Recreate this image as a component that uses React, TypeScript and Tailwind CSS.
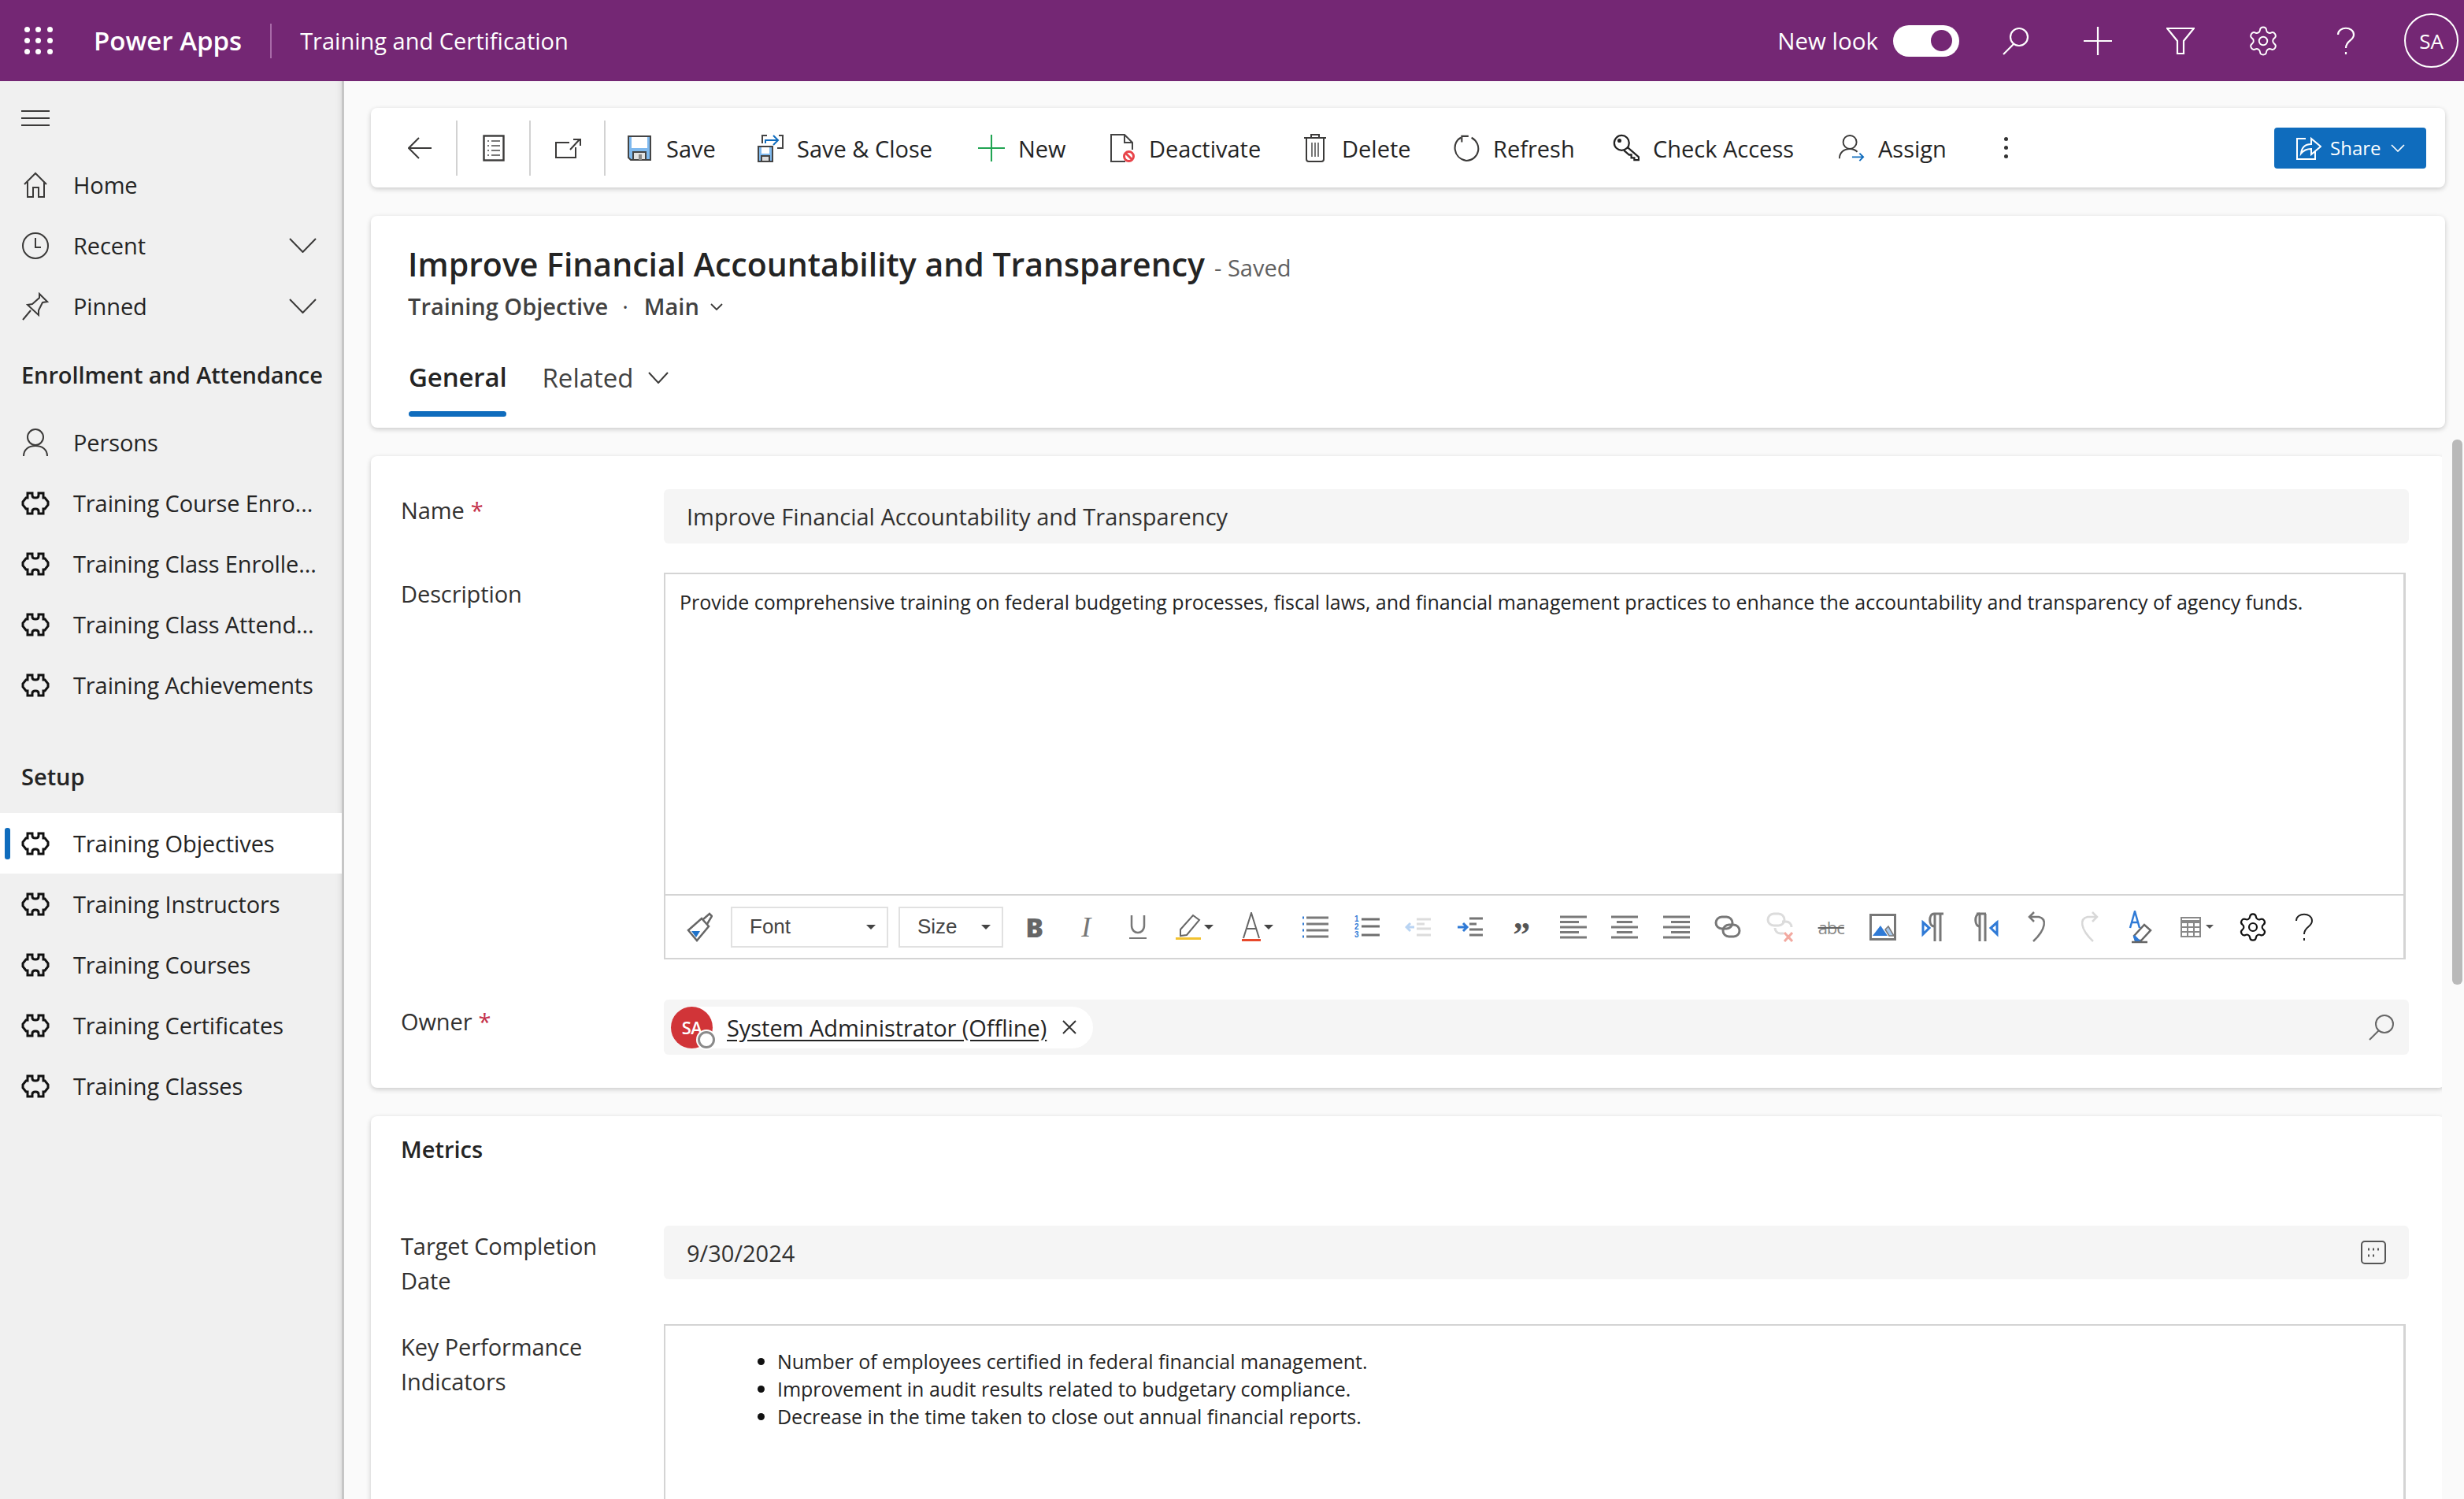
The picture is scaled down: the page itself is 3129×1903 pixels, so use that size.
import React from "react";
import { Settings } from "lucide-react";

const S = ({ w, h, vb, children, className, sw = 2, color = "#3b3a39" }: any) => (
  <svg width={w} height={h} viewBox={vb || `0 0 ${w} ${h}`} fill="none" stroke={color} strokeWidth={sw} className={className}>
    {children}
  </svg>
);

const Puzzle = () => (
  <S w={36} h={30} sw={3} color="#111">
    <path d="M8 2H14V5C14 9 22 9 22 5V2H28V8H30L34 13V17L30 22H28V28H22V25C22 21 14 21 14 25V28H8V22H6L2 17V13L6 8H8Z" strokeLinejoin="miter" />
  </S>
);
const Chevron = ({ w = 35, h = 19, sw = 2, color = "#3b3a39" }: any) => (
  <S w={w} h={h} sw={sw} color={color}><path d={`M1 1L${w / 2} ${h - 1}L${w - 1} 1`} /></S>
);
const Person = ({ w = 34, h = 36 }: any) => (
  <S w={w} h={h} vb="0 0 34 36" sw={2}>
    <circle cx="17" cy="11" r="10" />
    <path d="M2 35C2 27 8 22 17 22C26 22 32 27 32 35" />
  </S>
);
const Dropper = () => <span className="ml-[4px] h-0 w-0 border-x-[6px] border-t-[6px] border-x-transparent border-t-[#444]" />;

function NavRow({ icon, label, chevron, active }: any) {
  return (
    <div className={`relative flex h-[77px] items-center pl-[27px] pr-[32px] ${active ? "bg-white" : ""}`}>
      {active && <span className="absolute left-[6px] top-[19px] h-[40px] w-[7px] rounded-[3px] bg-[#0f6cbd]" />}
      <span className="flex w-[36px] justify-center">{icon}</span>
      <span className="ml-[30px] flex-1 whitespace-nowrap text-[29px] leading-none tracking-[-0.1px] text-[#242424]">{label}</span>
      {chevron && <Chevron />}
    </div>
  );
}

function ToolBtn({ w, icon, label }: any) {
  return (
    <div style={{ width: w }} className="flex h-full shrink-0 items-center">
      <span className="flex w-[34px] justify-center">{icon}</span>
      <span className="ml-[17px] whitespace-nowrap pt-[1px] text-[29px] leading-none text-[#242424]">{label}</span>
    </div>
  );
}

function Label({ children, star, className = "" }: any) {
  return (
    <div className={`w-[372px] shrink-0 pl-[38px] pr-[60px] text-[29px] leading-[44px] tracking-[-0.1px] text-[#323130] ${className}`}>
      {children}
      {star && <span className="ml-[8px] text-[#c4314b]">*</span>}
    </div>
  );
}

const Cell = ({ w = "65.5px", children }: any) => (
  <div style={{ width: w }} className="flex h-full shrink-0 items-center justify-center">{children}</div>
);

const Lines = ({ rows }: { rows: number[][] }) => (
  <S w={38} h={34} sw={3} color="#7a7a7a">
    {rows.map((r, i) => <path key={i} d={`M${r[0]} ${4 + i * 6.5}H${r[1]}`} />)}
  </S>
);

function EditorToolbar() {
  const blue = "#2f7ad6";
  return (
    <div className="flex h-[81px] items-center border-t-2 border-[#d4d4d4] pl-[10px]">
      <Cell w="66px">
        <S w={34} h={40} sw={2.5} color="#666">
          <path d="M3 24L20 9L29 19L14 37Z" />
          <path d="M7 25L18 25L13 33Z" fill="#1f72c9" stroke="none" />
          <path d="M22 10L30 3L33 6L27 16" />
        </S>
      </Cell>
      <div className="ml-[7px] flex h-[52px] w-[200px] items-center justify-between border-2 border-[#e1e1e1] pl-[22px] pr-[14px] font-['Liberation_Sans',sans-serif] text-[26px] text-[#444]">
        Font<span className="h-0 w-0 border-x-[6px] border-t-[6px] border-x-transparent border-t-[#444]" />
      </div>
      <div className="ml-[13px] flex h-[52px] w-[133px] items-center justify-between border-2 border-[#e1e1e1] pl-[22px] pr-[14px] font-['Liberation_Sans',sans-serif] text-[26px] text-[#444]">
        Size<span className="h-0 w-0 border-x-[6px] border-t-[6px] border-x-transparent border-t-[#444]" />
      </div>
      <div className="ml-[7px] flex h-full items-center">
        <Cell><span className="font-['Open_Sans',sans-serif] text-[34px] font-extrabold leading-none text-[#666]">B</span></Cell>
        <Cell><span className="font-['Liberation_Serif',serif] text-[36px] italic leading-none text-[#777]">I</span></Cell>
        <Cell>
          <span className="flex flex-col items-center">
            <S w={20} h={24} sw={2.5} color="#777"><path d="M2 0V13C2 25 18 25 18 13V0" /></S>
            <span className="mt-[4px] h-[2px] w-[22px] bg-[#777]" />
          </span>
        </Cell>
        <Cell w="78px">
          <span className="flex flex-col items-start">
            <S w={32} h={30} sw={2} color="#666">
              <path d="M6 20L22 2L30 8L14 27L6 28Z" />
            </S>
            <span className="h-[3px] w-[32px] bg-[#f2c230]" />
          </span>
          <Dropper />
        </Cell>
        <Cell w="82px">
          <span className="flex flex-col items-center">
            <S w={24} h={34} sw={2} color="#666"><path d="M2 33L12 1L22 33M6 21H18" /></S>
            <span className="h-[3px] w-[24px] bg-[#e8482b]" />
          </span>
          <Dropper />
        </Cell>
        <Cell>
          <S w={34} h={30} sw={3} color="#7a7a7a">
            <path d="M6 3H34M6 11H34M6 19H34M6 27H34" />
            <path d="M1 3H3M1 11H3M1 19H3M1 27H3" stroke={blue} />
          </S>
        </Cell>
        <Cell>
          <span className="flex items-center">
            <span className="flex flex-col font-['Liberation_Sans',sans-serif] text-[10px] font-bold leading-[10px] text-[#2f7ad6]"><span>1</span><span>2</span><span>3</span></span>
            <S w={26} h={30} sw={3} color="#6f6f6f"><path d="M3 5H26M3 14H26M3 25H26" /></S>
          </span>
        </Cell>
        <Cell>
          <S w={34} h={28} sw={3}>
            <path d="M15 4H33M15 10H25M15 16H33M15 24H33" stroke="#dcdcdc" />
            <path d="M12 14H2M7 9L2 14L7 19" stroke="#b9d4f3" />
          </S>
        </Cell>
        <Cell>
          <S w={34} h={28} sw={3}>
            <path d="M16 3H33M16 10H25M16 17H33M16 24H33" stroke="#757575" />
            <path d="M1 14H12M8 9L13 14L8 19" stroke={blue} />
          </S>
        </Cell>
        <Cell><span className="font-['Liberation_Serif',serif] text-[44px] font-bold leading-none text-[#555] translate-y-[10px]">”</span></Cell>
        <Cell><Lines rows={[[2, 36], [2, 26], [2, 36], [2, 26], [2, 36]]} /></Cell>
        <Cell><Lines rows={[[2, 36], [9, 29], [2, 36], [9, 29], [2, 36]]} /></Cell>
        <Cell><Lines rows={[[2, 36], [12, 36], [2, 36], [12, 36], [2, 36]]} /></Cell>
        <Cell>
          <S w={34} h={30} sw={3} color="#777">
            <rect x="2" y="2" width="21" height="15" rx="7.5" />
            <rect x="11" y="12" width="21" height="15" rx="7.5" />
          </S>
        </Cell>
        <Cell>
          <S w={34} h={38} sw={3} color="#dcdcdc">
            <rect x="2" y="2" width="21" height="15" rx="7.5" />
            <path d="M20 12H25C29 12 32 15 32 19M22 27H18C14 27 11 24 11 20" />
            <path d="M23 26L33 37M33 26L23 37" stroke="#f2a9a0" />
          </S>
        </Cell>
        <Cell>
          <span className="relative text-[22px] leading-none tracking-[-1px] text-[#888] line-through decoration-[#666] decoration-2">abc</span>
        </Cell>
        <Cell>
          <S w={34} h={34} sw={3} color="#777">
            <rect x="1.5" y="1.5" width="31" height="31" />
            <path d="M4 28L14 15L23 28Z" fill="#2f7ad6" stroke="none" />
            <path d="M20 20L24 16L31 28H25Z" fill="#aac8ea" stroke="#777" strokeWidth="1.5" />
          </S>
        </Cell>
        <Cell>
          <S w={32} h={40} sw={3} color="#777">
            <path d="M17 38V3M24 38V3M28 3H16C9 3 9 19 16 19H17" />
            <path d="M2 14L10 21L2 29Z" stroke="#2f7ad6" />
          </S>
        </Cell>
        <Cell>
          <S w={32} h={40} sw={3} color="#777">
            <path d="M8 38V3M15 38V3M4 3H16" />
            <path d="M8 3C1 3 1 19 8 19" />
            <path d="M30 14L22 21L30 29Z" stroke="#2f7ad6" />
          </S>
        </Cell>
        <Cell>
          <S w={24} h={40} sw={2.5} color="#777"><path d="M2 7H14C24 9 24 22 7 38M8 1L2 7L8 13" /></S>
        </Cell>
        <Cell>
          <S w={24} h={40} sw={2.5} color="#d8d8d8"><path d="M22 7H10C0 9 0 22 17 38M16 1L22 7L16 13" /></S>
        </Cell>
        <Cell>
          <S w={30} h={42} sw={2.5} color="#666">
            <path d="M2 22L8 1L14 22M4 15H12" stroke="#2f7ad6" />
            <path d="M7 32L20 18L28 25L16 38H9Z" />
            <path d="M7 32L13 38H9Z" fill="#2f7ad6" stroke="#2f7ad6" />
            <path d="M4 40H24" />
          </S>
        </Cell>
        <Cell w="77px">
          <S w={26} h={26} sw={2} color="#888">
            <rect x="1" y="1" width="24" height="24" fill="#fff" />
            <path d="M1 6H25" strokeWidth="4" />
            <path d="M1 13H25M1 19H25M9 5V25M17 5V25" />
          </S>
          <span className="ml-[6px]"><span className="block h-0 w-0 border-x-[5px] border-t-[5px] border-x-transparent border-t-[#555]" /></span>
        </Cell>
        <Cell>
          <Settings size={40} strokeWidth={1.3} color="#111" />
        </Cell>
        <Cell>
          <S w={24} h={36} sw={2} color="#222"><path d="M2 10C2 -1 22 -1 22 10C22 18 12 17 12 27M12 32V35" /></S>
        </Cell>
      </div>
    </div>
  );
}

function Form() {
  return (
    <div className="mt-[15px] flex min-h-0 flex-1">
      <div className="ml-[-8px] w-[2638px] shrink-0 overflow-hidden pl-[8px] pt-[21px]">
        <div className="w-[2634px]">
          <section className="flex h-[802px] flex-col rounded-[8px] bg-white pt-[42px] shadow-[0_2px_6px_rgba(0,0,0,0.2)]">
            <div className="flex h-[69px]">
              <Label star className="pt-[5px]">Name</Label>
              <div className="flex h-[69px] w-[2216px] items-center rounded-[6px] bg-[#f5f5f5] pl-[29px] text-[29px] leading-none text-[#323130]">Improve Financial Accountability and Transparency</div>
            </div>
            <div className="mt-[37px] flex h-[491px]">
              <Label className="pt-[5px]">Description</Label>
              <div className="flex h-[491px] w-[2212px] flex-col border-2 border-r-[3px] border-[#d4d4d4]">
                <div className="flex-1 pl-[18px] pt-[18px] text-[25px] leading-[34px] tracking-[-0.025px] text-[#242424]">
                  Provide comprehensive training on federal budgeting processes, fiscal laws, and financial management practices to enhance the accountability and transparency of agency funds.
                </div>
                <EditorToolbar />
              </div>
            </div>
            <div className="mt-[51px] flex h-[70px]">
              <Label star className="pt-[6px]">Owner</Label>
              <div className="flex h-[70px] w-[2216px] items-center rounded-[6px] bg-[#f5f5f5] pl-[9px]">
                <div className="flex h-[53px] w-[536px] items-center rounded-full bg-white">
                  <span className="relative flex h-[53px] w-[53px] items-center justify-center rounded-full bg-[#d13438] text-[22px] font-semibold leading-none tracking-[-0.5px] text-white">
                    SA
                    <span className="absolute bottom-0 right-[-3px] h-[22px] w-[22px] rounded-full border-[3px] border-[#8a8a8a] bg-white shadow-[0_0_0_2px_#fff]" />
                  </span>
                  <span className="ml-[18px] text-[29px] leading-none tracking-[-0.05px] text-[#242424] underline underline-offset-[4px]">System Administrator (Offline)</span>
                  <span className="ml-[19px]">
                    <S w={20} h={20} sw={2} color="#333"><path d="M2 2L18 18M18 2L2 18" /></S>
                  </span>
                </div>
                <span className="flex-1" />
                <span className="mr-[18px]">
                  <S w={34} h={34} sw={2} color="#666"><circle cx="21" cy="13" r="11" /><path d="M14 21L2 33" /></S>
                </span>
              </div>
            </div>
          </section>

          <section className="mt-[36px] flex h-[900px] flex-col rounded-[8px] bg-white pt-[20px] shadow-[0_2px_6px_rgba(0,0,0,0.2)]">
            <div className="pl-[38px] text-[29px] font-semibold leading-[44px] text-[#242424]">Metrics</div>
            <div className="mt-[75px] flex">
              <Label className="pt-[4px]">Target Completion Date</Label>
              <div className="flex h-[68px] w-[2216px] items-center rounded-[6px] bg-[#f5f5f5] pl-[29px] pr-[29px] text-[29px] leading-none text-[#323130]">
                <span className="flex-1">9/30/2024</span>
                <S w={32} h={30} sw={2} color="#555">
                  <rect x="1" y="1" width="30" height="28" rx="4" />
                  <path d="M9 11H11M15 11H17M21 11H23M9 19H11M15 19H17" strokeWidth="3" />
                </S>
              </div>
            </div>
            <div className="mt-[33px] flex">
              <Label className="pt-[7px]">Key Performance Indicators</Label>
              <div className="h-[500px] w-[2212px] border-2 border-r-[3px] border-[#d4d4d4]">
                <ul className="ml-[142px] mt-[28px] list-disc text-[25px] leading-[35px] tracking-[-0.025px] text-[#242424] marker:text-[#111]">
                  <li>Number of employees certified in federal financial management.</li>
                  <li>Improvement in audit results related to budgetary compliance.</li>
                  <li>Decrease in the time taken to close out annual financial reports.</li>
                </ul>
              </div>
            </div>
          </section>
        </div>
      </div>
      <div className="ml-[13px] h-[692px] w-[13px] rounded-[6px] bg-[#b9b9b9]" />
    </div>
  );
}

export default function App() {
  const setup = ["Training Objectives", "Training Instructors", "Training Courses", "Training Certificates", "Training Classes"];
  const enroll = ["Training Course Enro...", "Training Class Enrolle...", "Training Class Attend...", "Training Achievements"];
  return (
    <div className="flex h-[1903px] w-[3129px] flex-col overflow-hidden bg-[#fafafa] font-['Open_Sans','Noto_Sans',sans-serif] text-[#242424]">
      <header className="flex h-[103px] shrink-0 items-center bg-[#742774] text-white">
        <div className="ml-[31px] grid w-[36px] grid-cols-3 gap-[7px]">
          {Array.from({ length: 9 }).map((_, i) => <span key={i} className="h-[7px] w-[7px] rounded-full bg-white" />)}
        </div>
        <span className="ml-[52px] text-[33px] font-semibold leading-none">Power Apps</span>
        <span className="ml-[36px] h-[44px] w-[2px] bg-[#a86aa8]" />
        <span className="ml-[36px] text-[29px] leading-none">Training and Certification</span>
        <span className="flex-1" />
        <span className="text-[29.5px] leading-none">New look</span>
        <span className="ml-[19px] flex h-[40px] w-[84px] items-center justify-end rounded-full bg-white pr-[9px]">
          <span className="h-[27px] w-[27px] rounded-full bg-[#742774]" />
        </span>
        <span className="ml-[18px] flex w-[105px] justify-center">
          <S w={36} h={36} sw={2.2} color="#fff"><circle cx="23" cy="13" r="11" /><path d="M16 22L3 35" /></S>
        </span>
        <span className="flex w-[105px] justify-center">
          <S w={36} h={36} sw={2.2} color="#fff"><path d="M18 0V36M0 18H36" /></S>
        </span>
        <span className="flex w-[105px] justify-center">
          <S w={36} h={36} sw={2.2} color="#fff"><path d="M1 2H35L22 18V34H14V18Z" /></S>
        </span>
        <span className="flex w-[105px] justify-center"><Settings size={42} strokeWidth={1.1} color="#fff" /></span>
        <span className="flex w-[105px] justify-center">
          <S w={24} h={36} sw={2.2} color="#fff"><path d="M2 10C2 -1 22 -1 22 10C22 18 12 17 12 27M12 32V35" /></S>
        </span>
        <span className="ml-[22px] mr-[7px] flex h-[69px] w-[69px] items-center justify-center rounded-full border-2 border-white text-[26px] leading-none">SA</span>
      </header>

      <div className="flex min-h-0 flex-1">
        <aside className="relative z-10 w-[437px] shrink-0 border-r-[3px] border-[#c6c6c6] bg-[#f0f0f0] shadow-[inset_-8px_0_8px_-8px_rgba(0,0,0,0.12)]">
          <div className="flex h-[93px] items-center pl-[27px]">
            <S w={36} h={22} sw={2}><path d="M0 2H36M0 11H36M0 20H36" /></S>
          </div>
          <NavRow label="Home" icon={<S w={32} h={34}><path d="M2 16L16 2L30 16M6 13V32H13V20H20V32H27V13" /></S>} />
          <NavRow label="Recent" chevron icon={<S w={36} h={36}><circle cx="18" cy="18" r="16" /><path d="M18 8V20H25" /></S>} />
          <NavRow label="Pinned" chevron icon={<S w={34} h={36}><path d="M22 2L32 12L26 13L21 23L21 29L7 16L13 15L22 7ZM11 23L1 35" /></S>} />
          <div className="flex h-[96px] items-center pl-[27px] text-[29px] font-semibold leading-none tracking-[-0.1px] text-[#242424]">Enrollment and Attendance</div>
          <NavRow label="Persons" icon={<Person />} />
          {enroll.map((l) => <NavRow key={l} label={l} icon={<Puzzle />} />)}
          <div className="flex h-[124px] items-center pl-[27px] pt-[30px] text-[29px] font-semibold leading-none">Setup</div>
          {setup.map((l, i) => <NavRow key={l} label={l} icon={<Puzzle />} active={i === 0} />)}
        </aside>

        <main className="flex min-h-0 min-w-0 flex-1 flex-col overflow-hidden pl-[34px] pt-[34px]">
          <div className="flex h-[101px] w-[2634px] shrink-0 items-center rounded-[8px] bg-white shadow-[0_2px_6px_rgba(0,0,0,0.2)]">
            <div className="flex w-[108px] shrink-0 pl-[47px]">
              <S w={30} h={28}><path d="M30 14H2M14 1L1 14L14 27" /></S>
            </div>
            <span className="h-[70px] w-[2px] bg-[#d2d2d2]" />
            <div className="flex w-[91px] shrink-0 justify-center">
              <S w={28} h={34}>
                <rect x="1.5" y="1.5" width="25" height="31" strokeWidth="2.4" />
                <path d="M6 8H8M11 8H22M6 14H8M11 14H22M6 20H8M11 20H22M6 26H8M11 26H22" stroke="#777" />
              </S>
            </div>
            <span className="h-[70px] w-[2px] bg-[#d2d2d2]" />
            <div className="flex w-[93px] shrink-0 justify-center">
              <S w={34} h={26}><path d="M19 6H2V25H27V12M20 15L32 2M24 2H33V10" /></S>
            </div>
            <span className="h-[70px] w-[2px] bg-[#d2d2d2]" />
            <div className="w-[26px] shrink-0" />
            <ToolBtn w={166} label="Save" icon={
              <S w={30} h={32} sw={2} color="#444">
                <path d="M1 1H29V31H4L1 28Z" fill="#7fb9ee" />
                <rect x="5" y="2" width="20" height="14" fill="#fff" stroke="none" />
                <rect x="7" y="21" width="16" height="10" fill="#e2e2e2" />
                <path d="M14 24H18V31H14Z" fill="#888" stroke="none" />
              </S>} />
            <ToolBtn w={281} label="Save & Close" icon={
              <S w={34} h={36} sw={2} color="#444">
                <path d="M2 16H20V35H2Z" fill="#7fb9ee" />
                <rect x="6" y="17" width="10" height="8" fill="#fff" stroke="none" />
                <rect x="6" y="28" width="10" height="7" fill="#ddd" />
                <path d="M7 12V2H13M28 2H33V18H26" />
                <path d="M11 12V8H26M21 2L27 8L21 14" stroke="#0f6cbd" />
              </S>} />
            <ToolBtn w={166} label="New" icon={<S w={36} h={36} sw={2.2} color="#21a453"><path d="M18 0V36M0 18H36" /></S>} />
            <ToolBtn w={245} label="Deactivate" icon={
              <S w={32} h={36} sw={2} color="#444">
                <path d="M20 35H2V1H19L29 11V20M19 1V11H29" />
                <circle cx="24.5" cy="28.5" r="6" stroke="#e8444a" strokeWidth="3" fill="#fff" />
                <path d="M20.5 24.5L28.5 32.5" stroke="#e8444a" strokeWidth="3" />
              </S>} />
            <ToolBtn w={192} label="Delete" icon={
              <S w={30} h={36}>
                <path d="M1 5H29M10 5V1H20V5M4 5V32C4 34 5 35 7 35H23C25 35 26 34 26 32V5" />
                <path d="M11 11V29M15 11V29M19 11V29" stroke="#777" />
              </S>} />
            <ToolBtn w={203} label="Refresh" icon={
              <S w={36} h={36} sw={2.2}>
                <path d="M11 4C-1 9 -1 31 18 35C36 34 40 12 25 4" />
                <path d="M12 11V3H21" transform="translate(0 -1)" />
              </S>} />
            <ToolBtn w={286} label="Check Access" icon={
              <S w={36} h={36} sw={2.4} color="#222">
                <circle cx="12" cy="11" r="10" />
                <circle cx="9" cy="8" r="1.5" fill="#222" />
                <path d="M20 17L35 30V34H29V31H25V27H22L15 21" />
              </S>} />
            <ToolBtn w={196} label="Assign" icon={
              <S w={36} h={36}>
                <circle cx="16" cy="10" r="9" />
                <path d="M2 32C2 24 8 19 16 19C20 19 23 20 26 23" />
                <path d="M19 30H34M29 25L34 30L29 35" stroke="#0f6cbd" />
              </S>} />
            <div className="flex w-[34px] shrink-0 flex-col items-center gap-[6px]">
              <span className="h-[5px] w-[5px] rounded-full bg-[#333]" />
              <span className="h-[5px] w-[5px] rounded-full bg-[#333]" />
              <span className="h-[5px] w-[5px] rounded-full bg-[#333]" />
            </div>
            <span className="flex-1" />
            <div className="mr-[24px] flex h-[52px] w-[193px] items-center rounded-[4px] bg-[#0f6cbd] pl-[26px] text-white">
              <S w={34} h={32} sw={2} color="#fff">
                <path d="M14 4H3V30H26V20" />
                <path d="M8 23C9 14 14 11 21 11V4L33 14L21 24V17C15 17 11 19 8 23Z" />
              </S>
              <span className="ml-[11px] text-[24px] leading-none">Share</span>
              <span className="ml-[12px]"><Chevron w={18} h={10} sw={1.6} color="#fff" /></span>
            </div>
          </div>

          <div className="mt-[36px] flex h-[269px] w-[2634px] shrink-0 flex-col rounded-[8px] bg-white pl-[47px] pt-[32px] shadow-[0_2px_6px_rgba(0,0,0,0.2)]">
            <div className="flex items-baseline whitespace-nowrap">
              <span className="text-[41px] font-semibold leading-[58px] text-[#242424]">Improve Financial Accountability and Transparency</span>
              <span className="ml-[12px] text-[29px] leading-none text-[#616161]">- Saved</span>
            </div>
            <div className="mt-[6px] flex items-center text-[29px] font-semibold leading-[38px] text-[#424242]">
              <span>Training Objective</span>
              <span className="ml-[18px] font-normal">·</span>
              <span className="ml-[20px]">Main</span>
              <span className="ml-[14px]"><Chevron w={16} h={9} sw={1.8} /></span>
            </div>
            <div className="mt-[49px] flex pl-[1px]">
              <div className="flex flex-col">
                <span className="text-[33px] font-semibold leading-[44px] tracking-[-0.15px] text-[#242424]">General</span>
                <span className="mt-[21px] h-[7px] rounded-[4px] bg-[#0f6cbd]" />
              </div>
              <div className="ml-[45px] flex h-[44px] items-center text-[33px] leading-none text-[#424242]">
                Related
                <span className="ml-[18px]"><Chevron w={26} h={15} sw={2} /></span>
              </div>
            </div>
          </div>
          <Form />
        </main>
      </div>
    </div>
  );
}
